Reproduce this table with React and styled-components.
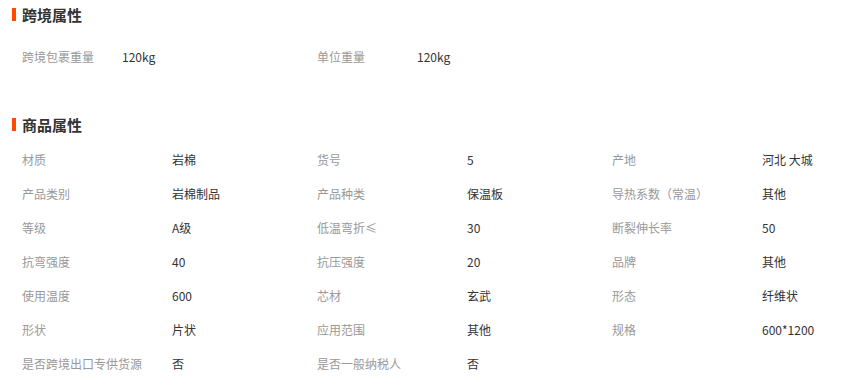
import React from "react";
import styled, { createGlobalStyle } from "styled-components";

const Global = createGlobalStyle`
  html, body { margin: 0; padding: 0; background: #fff; }
  body { font-family: "Noto Sans CJK SC", "Liberation Sans", Arial, sans-serif; font-size: 12px; color: #333; }
`;

const Page = styled.div`
  padding: 3px 0 0 12px;
  width: 856px;
  box-sizing: border-box;
`;

const Section = styled.section`
  margin-top: ${(p) => p.$top || 0}px;
`;

const Title = styled.h3`
  display: flex;
  align-items: center;
  margin: 0;
  height: 22px;
  font-size: 15px;
  font-weight: bold;
  color: #333;
  &::before {
    content: "";
    display: block;
    width: 4px;
    height: 13px;
    background: #ff4a00;
    margin-right: 6px;
  }
`;

const Grid = styled.div`
  display: grid;
  grid-template-columns: repeat(3, 295px);
  margin-top: ${(p) => p.$top}px;
`;

const Cell = styled.div`
  display: flex;
  height: 34px;
  align-items: center;
  padding-left: 10px;
`;

const Label = styled.span`
  width: ${(p) => p.$w}px;
  flex: none;
  color: #999;
  white-space: nowrap;
`;

const Value = styled.span`
  color: #333;
  white-space: nowrap;
`;

const cross = [
  ["跨境包裹重量", "120kg"],
  ["单位重量", "120kg"],
];

const goods = [
  ["材质", "岩棉"],
  ["货号", "5"],
  ["产地", "河北 大城"],
  ["产品类别", "岩棉制品"],
  ["产品种类", "保温板"],
  ["导热系数（常温）", "其他"],
  ["等级", "A级"],
  ["低温弯折≤", "30"],
  ["断裂伸长率", "50"],
  ["抗弯强度", "40"],
  ["抗压强度", "20"],
  ["品牌", "其他"],
  ["使用温度", "600"],
  ["芯材", "玄武"],
  ["形态", "纤维状"],
  ["形状", "片状"],
  ["应用范围", "其他"],
  ["规格", "600*1200"],
  ["是否跨境出口专供货源", "否"],
  ["是否一般纳税人", "否"],
];

export default function App() {
  return (
    <Page>
      <Global />
      <Section>
        <Title>跨境属性</Title>
        <Grid $top={14}>
          {cross.map(([k, v]) => (
            <Cell key={k}>
              <Label $w={100}>{k}</Label>
              <Value>{v}</Value>
            </Cell>
          ))}
        </Grid>
      </Section>
      <Section $top={40}>
        <Title>商品属性</Title>
        <Grid $top={7}>
          {goods.map(([k, v]) => (
            <Cell key={k}>
              <Label $w={150}>{k}</Label>
              <Value>{v}</Value>
            </Cell>
          ))}
        </Grid>
      </Section>
    </Page>
  );
}
